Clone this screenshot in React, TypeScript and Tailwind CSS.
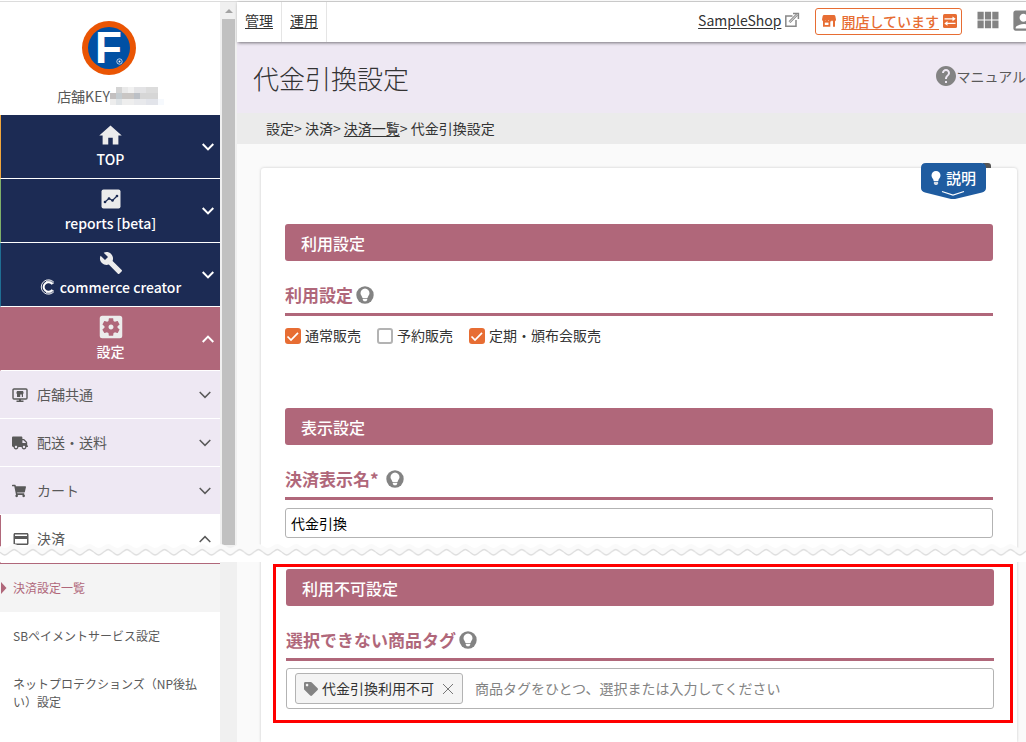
import React, { useState } from "react";
import {
  MdAccountBox,
  MdBuild,
  MdHelp,
  MdHome,
  MdPayment,
  MdSettingsApplications,
  MdViewModule,
} from "react-icons/md";
import { FaShoppingCart, FaTag, FaTruck } from "react-icons/fa";

/* ---------- icons ---------- */

const Chevron = ({ up = false, className = "" }: { up?: boolean; className?: string }) => (
  <svg viewBox="0 0 12 8" className={`h-2 w-3 shrink-0 ${className}`} fill="none" stroke="currentColor" aria-hidden="true">
    <path d={up ? "M0.7 7 6 1.6 11.3 7" : "M0.7 1 6 6.4 11.3 1"} />
  </svg>
);

const ReportIcon = () => (
  <svg viewBox="0 0 20 20" className="size-5" aria-hidden="true">
    <rect x="0.5" y="0.5" width="19" height="19" rx="2" fill="#ececec" />
    <path d="M4 13 8 9.5 11.5 11.5 16 7" stroke="#1c2b54" strokeWidth="1.2" fill="none" />
    <g fill="#1c2b54">
      <circle cx="4" cy="13" r="1.3" />
      <circle cx="8" cy="9.5" r="1.3" />
      <circle cx="11.5" cy="11.5" r="1.3" />
      <circle cx="16" cy="7" r="1.3" />
    </g>
  </svg>
);

const CreatorMark = () => (
  <svg viewBox="0 0 16 16" className="size-4" fill="none" stroke="#fff" aria-hidden="true">
    <path d="M14 3.4A7.200 7.200 0 1 0 14 12.600" strokeWidth="0.9" />
    <path d="M12.400 5.300A4.800 4.800 0 1 0 12.400 10.700" strokeWidth="2" />
    <path d="M6 2.600A6 6 0 0 1 13.500 5M6 13.400A6 6 0 0 0 13.500 11" strokeWidth="0.8" />
  </svg>
);

const ShopMonitorIcon = () => (
  <svg viewBox="0 0 16 16" className="size-4" aria-hidden="true">
    <rect x="1" y="2" width="14" height="10" rx="1" fill="none" stroke="#595959" strokeWidth="1.4" />
    <path d="M5 4h6l.8 2.500h-.8V10H9.800V7.500H8.200V10H5V6.500h-.8z" fill="#595959" />
    <path d="M7 12h2v1.6h2.5V15h-7v-1.4H7z" fill="#595959" />
  </svg>
);

const ExternalIcon = () => (
  <svg viewBox="0 0 16 16" className="size-4" fill="none" stroke="#888" strokeWidth="1.5" aria-hidden="true">
    <path d="M8.5 4H1.8v10.2H12V8" />
    <path d="M5.5 10.2 13 2.6" strokeWidth="2.6" />
    <path d="M5.5 10.2 13 2.6" stroke="#fff" strokeWidth="0.8" />
    <path d="M9 1.6h5.4V7" />
  </svg>
);

const StoreIcon = () => (
  <svg viewBox="0 0 16 14" className="h-[14px] w-4" aria-hidden="true">
    <path d="M3 1h10q1 0 1.300 1L15 5.500Q15 7.500 13.200 7.500T11 6.300Q10.500 7.500 9.300 7.500T7.500 6.300Q6.800 7.500 5.500 7.500T4.300 6.300Q4 7.500 2.700 7.500T1 5.500L1.700 2Q2 1 3 1z" fill="#e76d33" />
    <path d="M2 7h7.300v5.800H2zM12 7h2v5.800h-2z" fill="#e76d33" />
    <path d="M3.800 8.600h3.700V11H3.800z" fill="#fff" />
  </svg>
);

const SwitchIcon = () => (
  <svg viewBox="0 0 14 14" className="size-[14px]" aria-hidden="true">
    <rect width="14" height="14" rx="1.5" fill="#e76d33" />
    <path d="M1.5 4.800H10M12.5 9.400H4" stroke="#fff" strokeWidth="1.3" />
    <path d="M9.5 2.400 12.700 4.800 9.5 7.200zM4.5 7 1.300 9.400 4.5 11.800z" fill="#fff" />
  </svg>
);

const HintIcon = () => (
  <svg viewBox="0 0 18 18" className="size-[18px]" aria-hidden="true">
    <circle cx="9" cy="9" r="8.7" fill="#838383" />
    <path d="M9 2.600a4.600 4.600 0 0 0-4.500 4.700c0 2 1.600 2.700 2 4.700h5c.4-2 2-2.700 2-4.700A4.600 4.600 0 0 0 9 2.600z" fill="#fff" />
    <path d="M6.800 12.800h4.400v1.200l-1 1.300H7.800l-1-1.300z" fill="#fff" />
  </svg>
);

const Logo = () => (
  <svg viewBox="0 0 54 54" className="size-[54px]" aria-hidden="true">
    <circle cx="27" cy="27" r="27" fill="#ea5504" />
    <circle cx="27" cy="27" r="21" fill="#0050a4" />
    <text x="13" y="42" fontSize="44" fontWeight="700" fontFamily="Liberation Sans, sans-serif" fill="#fff">
      F
    </text>
    <circle cx="37.500" cy="40.500" r="2.700" fill="none" stroke="#fff" strokeWidth="0.7" />
    <circle cx="37.500" cy="40.500" r="1" fill="#fff" />
  </svg>
);

// masked part of the shop key
const MaskedKey = () => (
  <svg viewBox="0 0 54 18" className="h-[18px] w-[54px]" shapeRendering="crispEdges" aria-hidden="true">
    <path d="M6 0h6v6H6z" fill="#d4d4d4" />
    <path d="M12 0h6v6h-6z" fill="#e9e9e9" />
    <path d="M18 0h6v6h-6z" fill="#f1f1f1" />
    <path d="M24 0h12v6H24z" fill="#e3e3e5" />
    <path d="M36 0h12v6H36z" fill="#dcdcdc" />
    <path d="M0 6h6v6H0z" fill="#c3c0c0" />
    <path d="M6 6h6v6H6z" fill="#c5ccd0" />
    <path d="M12 6h12v6H12z" fill="#c9c6c4" />
    <path d="M24 6h6v6h-6z" fill="#bcc0c6" />
    <path d="M30 6h18v6H30z" fill="#d6d6d6" />
    <path d="M0 12h6v6H0z" fill="#ededed" />
    <path d="M6 12h6v6H6z" fill="#dfe3e6" />
    <path d="M12 12h12v6H12z" fill="#eeeeee" />
    <path d="M24 12h12v6H24z" fill="#e8e9ec" />
    <path d="M36 12h12v6H36z" fill="#e2e4ea" />
    <path d="M48 12h6v6h-6z" fill="#f6f9fd" />
  </svg>
);

/* ---------- sidebar ---------- */

const MAIN_NAV = [
  { label: "TOP", edge: "border-l-[#f0a63c]", icon: <MdHome className="size-[27px]" /> },
  { label: "reports [beta]", edge: "border-l-[#7fb069]", icon: <ReportIcon /> },
  { label: "commerce creator", edge: "border-l-[#1f6f94]", icon: <MdBuild className="size-6" />, mark: true },
  { label: "設定", edge: "border-l-[#b0677a]", icon: <MdSettingsApplications className="size-[30px]" />, active: true },
];

const SUB_NAV = [
  { label: "店舗共通", icon: <ShopMonitorIcon /> },
  { label: "配送・送料", icon: <FaTruck className="size-4" /> },
  { label: "カート", icon: <FaShoppingCart className="size-[14px]" /> },
  { label: "決済", icon: <MdPayment className="size-[18px]" />, open: true },
];

const Sidebar = () => (
  <aside className="w-[220px] shrink-0 bg-white text-[#595959]">
    <div className="flex h-[113px] flex-col items-center pr-[2px] pt-[19px]">
      <Logo />
      <div className="mt-[11px] flex h-5 items-center pl-[3px] text-sm">
        <span>店舗KEY</span>
        <MaskedKey />
      </div>
    </div>

    <nav>
      {MAIN_NAV.map((item) => (
        <button
          key={item.label}
          className={`relative flex h-16 w-full flex-col items-center border-b border-l border-b-white pt-2 text-sm font-medium text-white ${item.edge} ${
            item.active ? "bg-[#b0677a]" : "bg-[#1c2b54]"
          }`}
        >
          <span className="flex h-6 items-center text-[#ececec]">{item.icon}</span>
          <span className="flex items-center gap-1 leading-6">
            {item.mark && <CreatorMark />}
            {item.label}
          </span>
          <Chevron up={item.active} className="absolute right-[6px] top-7 stroke-2" />
        </button>
      ))}

      {SUB_NAV.map((item) => (
        <button
          key={item.label}
          className={`flex h-12 w-full items-center border-b border-b-white pr-[9px] text-sm ${
            item.open ? "border-l border-l-[#b0677a] bg-white pl-[11px]" : "bg-[#eee8f3] pl-3"
          }`}
        >
          <span className="flex w-[25px] items-center">{item.icon}</span>
          <span className="pb-0.5">{item.label}</span>
          <Chevron up={item.open} className="ml-auto stroke-[1.5]" />
        </button>
      ))}

      <ul className="border-t border-[#b0677a] text-xs leading-[18px]">
        <li className="relative bg-[#f4f4f4] px-[13px] py-[15px] text-[#b0677a]">
          <svg viewBox="0 0 6 12" className="absolute left-0 top-[18px] h-3 w-[7px]" fill="currentColor" aria-hidden="true">
            <path d="M0.5 0 6 6 0.5 12z" />
          </svg>
          <a href="#list">決済設定一覧</a>
        </li>
        <li className="px-[13px] py-[15px]">
          <a href="#sb">SBペイメントサービス設定</a>
        </li>
        <li className="px-[13px] py-[15px]">
          <a href="#np">ネットプロテクションズ（NP後払い）設定</a>
        </li>
      </ul>
    </nav>
  </aside>
);

const ScrollTrack = () => (
  <div className="flex w-[17px] shrink-0 flex-col items-center bg-[#f0f0f0]" aria-hidden="true">
    <svg viewBox="0 0 8 4" className="mt-[7px] mb-[6px] h-1 w-2" fill="#a3a3a3">
      <path d="M4 0 8 4H0z" />
    </svg>
    <div className="h-[526px] w-[13px] bg-[#c1c1c1]" />
  </div>
);

/* ---------- main ---------- */

const Header = () => (
  <header className="relative flex h-10 items-stretch bg-white text-sm text-[#333] shadow-[1px_1px_3px_rgba(0,0,0,0.5)]">
    {["管理", "運用"].map((tab) => (
      <a key={tab} href={`#${tab}`} className="flex items-center border-r border-[#e5e5e5] px-2 pb-1 underline underline-offset-2">
        {tab}
      </a>
    ))}
    <div className="ml-auto flex items-center pb-0.5">
      <a href="#shop" className="flex items-center gap-[3px] pb-0.5">
        <span className="underline underline-offset-2">SampleShop</span>
        <ExternalIcon />
      </a>
      <button className="ml-[15px] flex h-[27px] items-center gap-1 rounded-[3px] border border-[#e76d33] pl-[5px] pr-1 font-medium text-[#e76d33]">
        <StoreIcon />
        <span className="underline underline-offset-2">開店しています</span>
        <SwitchIcon />
      </button>
      <button aria-label="メニュー" className="ml-3 pb-0.5 text-[#838383]">
        <MdViewModule className="size-7" />
      </button>
      <button aria-label="アカウント" className="ml-2 w-4 overflow-hidden pb-0.5 text-[#838383]">
        <MdAccountBox className="size-[27px] max-w-none" />
      </button>
    </div>
  </header>
);

const SectionBar = ({ children }: { children: React.ReactNode }) => (
  <h2 className="flex h-[37px] items-center rounded-[3px] bg-[#b0677a] px-4 text-base font-medium text-white">
    {children}
  </h2>
);

const FieldHeading = ({ children, required = false }: { children: React.ReactNode; required?: boolean }) => (
  <h3 className="mt-6 flex items-center gap-[3px] border-b-[3px] border-[#b0677a] pb-2 text-[17px] font-bold leading-5 text-[#b0677a]">
    <span className={required ? "pr-1" : ""}>
      {children}
      {required && "*"}
    </span>
    <HintIcon />
  </h3>
);

const SaleCheck = ({ label, initial }: { label: string; initial: boolean }) => {
  const [checked, setChecked] = useState(initial);
  return (
    <label className="flex h-4 items-center gap-1">
      <span className="relative size-4">
        <input
          type="checkbox"
          checked={checked}
          onChange={() => setChecked(!checked)}
          className="block size-4 appearance-none rounded-[3px] border-2 border-[#b3b3b3] bg-white checked:border-[#e76d33] checked:bg-[#e76d33]"
        />
        {checked && (
          <svg viewBox="0 0 16 16" className="pointer-events-none absolute inset-0" fill="none" stroke="#fff" strokeWidth="1.7">
            <path d="M2.5 8.5 6 12 13 4.800" />
          </svg>
        )}
      </span>
      <span className="pb-0.5">{label}</span>
    </label>
  );
};

const ExplainButton = () => (
  <button className="absolute -top-[5px] right-[26px] flex h-9 w-[70px] items-start text-[15px] font-medium text-white">
    <svg viewBox="0 0 70 36" className="absolute inset-0 h-9 w-[70px]" aria-hidden="true">
      <path d="M62 0h5q3 0 3 3v2h-8z" fill="#555" />
      <path d="M5 0h55q5 0 5 5v20q0 3-4 4.500L32 36.500 4 29.500Q0 28 0 25V5q0-5 5-5z" fill="#1f5ca0" />
      <path d="M21 28.500 32 32 43 28.500" fill="none" stroke="#fff" strokeWidth="1.2" />
      <path d="M15 8a4.500 4.500 0 0 0-4.500 4.600c0 2.200 1.900 3 2.200 5.400h4.600c.3-2.400 2.200-3.200 2.200-5.400A4.500 4.500 0 0 0 15 8z" fill="#fff" />
      <path d="M12.900 18.800h4.200v1.700l-1 1.500h-2.200l-1-1.500z" fill="#d5dde8" />
    </svg>
    <span className="relative pl-[25px] leading-[30px]">説明</span>
  </button>
);

// wavy strip marking the omitted part of the page
const TearLine = () => (
  <svg className="pointer-events-none absolute inset-x-0 top-[544px] h-[18px] w-full" aria-hidden="true">
    <defs>
      <pattern id="tear" width="18.8" height="18" patternUnits="userSpaceOnUse">
        <path d="M0 2C2 3.200 3 4 4.700 4S7.400 3.200 9.400 2 12.500 0 14.100 0 16.800 0.800 18.800 2V18H0z" fill="#fafafa" />
        <path d="M0 8.200C2 9.600 3 11 4.700 11S7.400 9.600 9.400 8.200 12.500 5.500 14.100 5.500 16.800 6.800 18.800 8.200V18H0z" fill="#fff" />
        <path d="M0 8.200C2 9.600 3 11 4.700 11S7.400 9.600 9.400 8.200 12.500 5.500 14.100 5.500 16.800 6.800 18.800 8.200" fill="none" stroke="#dedede" strokeWidth="1.3" />
      </pattern>
    </defs>
    <rect width="100%" height="18" fill="url(#tear)" />
  </svg>
);

export default function App() {
  const [tags, setTags] = useState(["代金引換利用不可"]);

  return (
    <div className="relative flex min-h-screen flex-col overflow-hidden bg-white pt-px font-['Noto_Sans_CJK_JP',sans-serif]">
      <div className="flex flex-1 border-t border-[#dcdcdc]">
        <Sidebar />
        <ScrollTrack />

        <main className="flex min-w-0 flex-1 flex-col bg-[#fafafa] text-sm text-[#333]">
          <Header />

          <div className="flex h-[71px] items-center justify-between bg-[#eee8f3] pl-4">
            <h1 className="text-[26px] font-extralight text-[#333]">代金引換設定</h1>
            <a href="#manual" className="flex items-center pb-1 text-[#595959]">
              <MdHelp className="-mr-0.5 size-6 text-[#838383]" />
              マニュアル
            </a>
          </div>

          <div className="flex h-[31px] items-center bg-[#ebebeb] pb-0.5 pl-[29px]">
            設定&gt;&nbsp;決済&gt;&nbsp;
            <a href="#payments" className="underline underline-offset-2">
              決済一覧
            </a>
            &gt;&nbsp;代金引換設定
          </div>

          <div className="relative ml-6 mr-[9px] mt-6 flex-1 rounded-t-[3px] bg-white px-6 pt-14 shadow-[0_0_3px_rgba(0,0,0,0.2)]">
            <ExplainButton />

            <SectionBar>利用設定</SectionBar>
            <FieldHeading>利用設定</FieldHeading>
            <div className="mt-3 flex gap-4">
              <SaleCheck label="通常販売" initial={true} />
              <SaleCheck label="予約販売" initial={false} />
              <SaleCheck label="定期・頒布会販売" initial={true} />
            </div>

            <div className="mt-16">
              <SectionBar>表示設定</SectionBar>
              <FieldHeading required>決済表示名</FieldHeading>
              <input
                type="text"
                aria-label="決済表示名"
                defaultValue="代金引換"
                className="mt-2 block h-[30px] w-full rounded-[3px] border border-[#b3b3b3] bg-white px-[5px] text-black"
              />
            </div>

            <div className="-ml-3 -mr-5 mt-[26px] border-[3px] border-[#ff0000] pb-[11px] pl-[10px] pr-4 pt-[2px]">
              <SectionBar>利用不可設定</SectionBar>
              <FieldHeading>選択できない商品タグ</FieldHeading>
              <div className="mt-[7px] flex h-[41px] items-center rounded-[3px] border border-[#b3b3b3] bg-white pl-2">
                {tags.map((tag) => (
                  <span key={tag} className="flex h-[31px] shrink-0 items-center rounded-[3px] border border-[#b3b3b3] bg-[#f4f4f4] px-2">
                    <FaTag className="mr-1 size-[14px] text-[#838383]" />
                    <span className="pb-0.5">{tag}</span>
                    <button
                      aria-label={`${tag}を削除`}
                      onClick={() => setTags(tags.filter((t) => t !== tag))}
                      className="ml-2"
                    >
                      <svg viewBox="0 0 12 12" className="size-3" fill="none" stroke="#777">
                        <path d="M1 1 11 11M11 1 1 11" />
                      </svg>
                    </button>
                  </span>
                ))}
                <input
                  type="text"
                  aria-label="選択できない商品タグ"
                  placeholder="商品タグをひとつ、選択または入力してください"
                  className="h-full min-w-0 flex-1 bg-transparent px-3 pb-0.5 placeholder:text-[#838383] focus:outline-none"
                />
              </div>
            </div>
          </div>
        </main>
      </div>
      <TearLine />
    </div>
  );
}
